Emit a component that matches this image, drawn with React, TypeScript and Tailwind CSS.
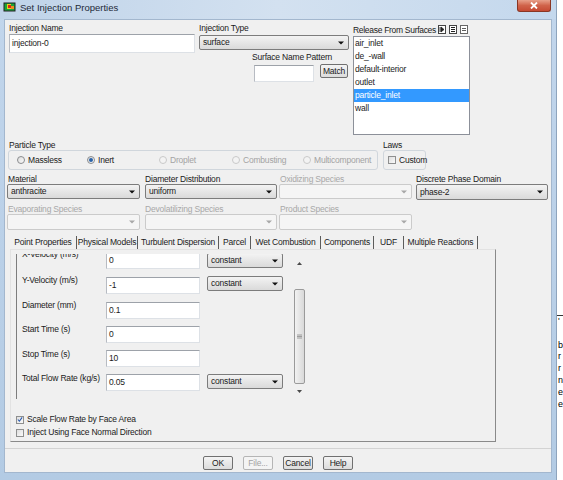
import React from "react";

function Arrow({ disabled }: { disabled?: boolean }) {
  return (
    <svg width="6" height="4" viewBox="0 0 6 4" className="shrink-0">
      <path d="M0 0.5h6L3 3.5z" fill={disabled ? "#a8a8a8" : "#111"} />
    </svg>
  );
}

function Combo({
  value,
  className,
  disabled,
}: {
  value?: string;
  className: string;
  disabled?: boolean;
}) {
  return (
    <div
      className={`flex items-center justify-between rounded-[2px] border pl-[3px] pr-[4px] ${
        disabled
          ? "border-[#cbcbcb] bg-[#f5f5f5]"
          : "border-[#7c7c7c] bg-gradient-to-b from-[#f3f3f3] to-[#dadada]"
      } ${className}`}
    >
      <span>{value}</span>
      <Arrow disabled={disabled} />
    </div>
  );
}

function TextBox({ value, className }: { value?: string; className: string }) {
  return (
    <div
      className={`flex items-center border border-t-[#9da2a9] border-l-[#b7bbc2] border-r-[#dde1e6] border-b-[#dde1e6] bg-white pl-[2px] ${className}`}
    >
      {value}
    </div>
  );
}

function Radio({
  label,
  checked,
  disabled,
  className,
}: {
  label: string;
  checked?: boolean;
  disabled?: boolean;
  className?: string;
}) {
  return (
    <div className={`flex items-center gap-[3px] ${className ?? ""}`}>
      <span
        className={`flex h-[8px] w-[8px] items-center justify-center rounded-full border ${
          disabled
            ? "border-[#c9c9c9] bg-[#f3f3f3]"
            : "border-[#8a8c8e] bg-gradient-to-br from-[#dcdcdc] to-[#fbfbfb]"
        }`}
      >
        {checked && <span className="h-[4px] w-[4px] rounded-full bg-[#2a63a8]" />}
      </span>
      <span className={disabled ? "text-[#a3a3a3]" : ""}>{label}</span>
    </div>
  );
}

function Check({ label, checked }: { label: string; checked?: boolean }) {
  return (
    <div className="flex h-[11px] items-center gap-[3px]">
      <span className="flex h-[8px] w-[8px] items-center justify-center border border-[#8e8f8f] bg-gradient-to-br from-[#dedede] to-[#fafafa]">
        {checked && (
          <svg width="7" height="7" viewBox="0 0 7 7">
            <path d="M1 3.5l1.8 2L6 1" stroke="#2a5bb0" strokeWidth="1.3" fill="none" />
          </svg>
        )}
      </span>
      <span>{label}</span>
    </div>
  );
}

function Btn({ label, disabled }: { label: string; disabled?: boolean }) {
  return (
    <div
      className={`flex h-[14px] w-[30px] items-center justify-center rounded-[2px] border ${
        disabled
          ? "border-[#b5b5b5] bg-[#f4f4f4] text-[#a3a3a3]"
          : "border-[#707070] bg-gradient-to-b from-[#f4f4f4] to-[#dcdcdc]"
      }`}
    >
      {label}
    </div>
  );
}

const surfaces = ["air_inlet", "de_-wall", "default-interior", "outlet", "particle_inlet", "wall"];

const tabs: [string, string][] = [
  ["Point Properties", "w-[66px]"],
  ["Physical Models", "w-[60px]"],
  ["Turbulent Dispersion", "w-[80px]"],
  ["Parcel", "w-[31px]"],
  ["Wet Combustion", "w-[69px]"],
  ["Components", "w-[52px]"],
  ["UDF", "w-[29px]"],
  ["Multiple Reactions", "w-[73px]"],
];

export default function App() {
  return (
    <div className="flex h-[480px] w-[563px] overflow-hidden bg-white font-['Liberation_Sans',Arial,sans-serif] text-[8.5px] leading-[11px] tracking-[-0.2px] text-[#1b1b1b]">
      {/* window */}
      <div className="flex h-[480px] w-[557px] flex-col bg-gradient-to-b from-[#c2d6ec] to-[#b3cbe4] border-r border-[#8ea4bd]">
        {/* title bar */}
        <div className="flex h-[19px] items-start bg-gradient-to-r from-[#bfd3e9] via-[#d3e1f0] to-[#c4d8ed]">
          <svg width="13" height="10" viewBox="0 0 13 10" className="ml-[3px] mt-[2px]">
            <rect x="0.5" y="0.5" width="12" height="9" fill="#222" />
            <rect x="1.5" y="1.5" width="10" height="7" fill="#1aa33a" />
            <rect x="4" y="2" width="4" height="5" fill="#e8d21c" />
            <rect x="5" y="3" width="3" height="3" fill="#d8261c" />
            <rect x="8" y="4" width="3" height="3" fill="#f08a1c" />
          </svg>
          <span className="ml-[4px] mt-[2px] text-[9.5px] leading-[12px] tracking-normal text-[#1e2a38]">
            Set Injection Properties
          </span>
          <div className="ml-auto mr-[5px] flex h-[12px] w-[34px] items-center justify-center rounded-b-[3px] border border-t-0 border-[#8a3624] bg-gradient-to-b from-[#e7a08a] via-[#d0634a] to-[#c54a33]">
            <svg width="8" height="7" viewBox="0 0 8 7">
              <path d="M1 0.5l6 6M7 0.5l-6 6" stroke="#fff" strokeWidth="1.8" />
            </svg>
          </div>
        </div>

        {/* content */}
        <div className="ml-[4px] flex h-[454px] w-[548px] flex-col border border-[#a3b7ce] bg-[#f0f0f0]">
          {/* top section */}
          <div className="flex pt-[3px]">
            <div className="ml-[4px] flex w-[186px] flex-col">
              <div className="h-[11px]">Injection Name</div>
              <TextBox value="injection-0" className="h-[19px] w-[186px]" />
            </div>
            <div className="ml-[4px] flex w-[150px] flex-col">
              <div className="h-[11px]">Injection Type</div>
              <Combo value="surface" className="mt-[1px] h-[15px] w-[150px]" />
              <div className="ml-[53px] mt-[2px] h-[11px] whitespace-nowrap">Surface Name Pattern</div>
              <div className="ml-[55px] mt-[1px] flex items-start">
                <TextBox className="mt-[1px] h-[17px] w-[60px]" />
                <div className="ml-[6px] flex h-[14px] w-[28px] items-center justify-center rounded-[2px] border border-[#707070] bg-gradient-to-b from-[#f4f4f4] to-[#dcdcdc]">
                  Match
                </div>
              </div>
            </div>
            <div className="ml-[4px] flex w-[117px] flex-col">
              <div className="flex h-[13px] items-end">
                <span className="whitespace-nowrap tracking-[-0.3px]">Release From Surfaces</span>
                <div className="mb-[2px] ml-auto mr-[2px] flex shrink-0 gap-[3px]">
                  <svg width="8" height="9" viewBox="0 0 8 9">
                    <rect x="0.5" y="0.5" width="7" height="8" fill="#fff" stroke="#444" />
                    <path d="M2 2v5M3 2l3 2.5L3 7z" stroke="#222" strokeWidth="0.8" fill="#222" />
                  </svg>
                  <svg width="8" height="9" viewBox="0 0 8 9">
                    <rect x="0.5" y="0.5" width="7" height="8" fill="#fff" stroke="#444" />
                    <path d="M2 2.5h4M2 4.5h4M2 6.5h4" stroke="#222" strokeWidth="1" />
                  </svg>
                  <svg width="8" height="9" viewBox="0 0 8 9">
                    <rect x="0.5" y="0.5" width="7" height="8" fill="#fff" stroke="#666" />
                    <path d="M2 3.5h4M2 5.5h4" stroke="#333" strokeWidth="0.8" />
                  </svg>
                </div>
              </div>
              <div className="h-[99px] w-[117px] border border-[#8c9099] bg-white">
                {surfaces.map((s) => (
                  <div
                    key={s}
                    className={`flex h-[13px] items-center pl-[1px] ${
                      s === "particle_inlet" ? "bg-[#3399ff] text-white" : ""
                    }`}
                  >
                    {s}
                  </div>
                ))}
              </div>
            </div>
          </div>

          {/* particle type + laws */}
          <div className="mt-[5px] flex">
            <div className="ml-[3px] flex w-[370px] flex-col">
              <div className="h-[10px] pl-[1px] leading-[10px]">Particle Type</div>
              <div className="flex h-[20px] items-center rounded-[3px] border border-[#d0d6dc] pl-[8px]">
                <Radio label="Massless" className="w-[70px]" />
                <Radio label="Inert" checked className="w-[72px]" />
                <Radio label="Droplet" disabled className="w-[73px]" />
                <Radio label="Combusting" disabled className="w-[71px]" />
                <Radio label="Multicomponent" disabled />
              </div>
            </div>
            <div className="ml-[5px] flex w-[43px] flex-col">
              <div className="h-[10px] leading-[10px]">Laws</div>
              <div className="flex h-[20px] items-center rounded-[3px] border border-[#d0d6dc] pl-[4px]">
                <Check label="Custom" />
              </div>
            </div>
          </div>

          {/* selects row 1 */}
          <div className="mt-[4px] flex">
            <div className="ml-[2px] flex w-[133px] flex-col">
              <div className="h-[10px] pl-[1px] leading-[10px]">Material</div>
              <Combo value="anthracite" className="h-[15px] w-[133px]" />
            </div>
            <div className="ml-[5px] flex w-[132px] flex-col">
              <div className="h-[10px] leading-[10px]">Diameter Distribution</div>
              <Combo value="uniform" className="h-[15px] w-[132px]" />
            </div>
            <div className="ml-[2px] flex w-[133px] flex-col">
              <div className="h-[10px] pl-[1px] leading-[10px] text-[#a8a8a8]">Oxidizing Species</div>
              <Combo disabled className="h-[15px] w-[133px]" />
            </div>
            <div className="ml-[4px] flex w-[132px] flex-col">
              <div className="h-[10px] leading-[10px]">Discrete Phase Domain</div>
              <Combo value="phase-2" className="h-[16px] w-[132px]" />
            </div>
          </div>

          {/* selects row 2 */}
          <div className="mt-[4px] flex text-[#a8a8a8]">
            <div className="ml-[2px] flex w-[133px] flex-col">
              <div className="h-[10px] pl-[1px] leading-[10px]">Evaporating Species</div>
              <Combo disabled className="h-[16px] w-[133px]" />
            </div>
            <div className="ml-[5px] flex w-[132px] flex-col">
              <div className="h-[10px] leading-[10px]">Devolatilizing Species</div>
              <Combo disabled className="h-[16px] w-[132px]" />
            </div>
            <div className="ml-[2px] flex w-[133px] flex-col">
              <div className="h-[10px] pl-[1px] leading-[10px]">Product Species</div>
              <Combo disabled className="h-[16px] w-[133px]" />
            </div>
          </div>

          {/* tabs */}
          <div className="ml-[5px] mt-[5px] flex h-[14px]">
            {tabs.map(([t, w]) => (
              <React.Fragment key={t}>
                <div className={`flex items-center justify-center whitespace-nowrap ${w}`}>{t}</div>
                <div className="mt-[1px] h-[13px] w-px bg-[#5c5c5c]" />
              </React.Fragment>
            ))}
          </div>

          {/* tab panel */}
          <div className="ml-[5px] flex h-[193px] w-[486px] flex-col border border-t-[#e2e2e2] border-l-[#e2e2e2] border-r-[#8a8a8a] border-b-[#8a8a8a]">
            <div className="ml-[5px] mt-[4px] flex h-[145px] w-[291px] border-l border-[#7d7d7d]">
              <div className="flex h-[145px] w-[277px] flex-col overflow-hidden">
                <div className="-mt-[2px] flex h-[17px] items-start pl-[5px]">
                  <span className="-mt-[3px] w-[84px]">X-Velocity (m/s)</span>
                  <TextBox value="0" className="h-[17px] w-[94px]" />
                  <Combo value="constant" className="ml-[7px] mt-px h-[15px] w-[76px]" />
                </div>
                <div className="mt-[8px] flex h-[17px] items-start pl-[5px]">
                  <span className="-mt-[2px] w-[84px]">Y-Velocity (m/s)</span>
                  <TextBox value="-1" className="h-[17px] w-[94px]" />
                  <Combo value="constant" className="ml-[7px] -mt-px h-[15px] w-[76px]" />
                </div>
                <div className="mt-[8px] flex h-[17px] items-start pl-[5px]">
                  <span className="-mt-[2px] w-[84px]">Diameter (mm)</span>
                  <TextBox value="0.1" className="h-[17px] w-[94px]" />
                </div>
                <div className="mt-[7px] flex h-[17px] items-start pl-[5px]">
                  <span className="-mt-[2px] w-[84px]">Start Time (s)</span>
                  <TextBox value="0" className="h-[17px] w-[94px]" />
                </div>
                <div className="mt-[7px] flex h-[17px] items-start pl-[5px]">
                  <span className="-mt-[1px] w-[84px]">Stop Time (s)</span>
                  <TextBox value="10" className="h-[17px] w-[94px]" />
                </div>
                <div className="mt-[7px] flex h-[17px] items-start pl-[5px]">
                  <span className="-mt-[1px] w-[84px] whitespace-nowrap">Total Flow Rate (kg/s)</span>
                  <TextBox value="0.05" className="h-[17px] w-[94px]" />
                  <Combo value="constant" className="ml-[7px] h-[15px] w-[76px]" />
                </div>
              </div>
              {/* scrollbar */}
              <div className="flex w-[11px] flex-col">
                <div className="flex h-[18px] items-center justify-center">
                  <svg width="5" height="3" viewBox="0 0 5 3">
                    <path d="M0 3h5L2.5 0z" fill="#4a4a4a" />
                  </svg>
                </div>
                <div className="h-[17px]" />
                <div className="flex h-[95px] items-center justify-center rounded-[2px] border border-[#9a9a9a] bg-gradient-to-r from-[#f2f2f2] to-[#d9d9d9]">
                  <svg width="5" height="5" viewBox="0 0 5 5">
                    <path d="M0 1h5M0 2.5h5M0 4h5" stroke="#8a8a8a" strokeWidth="0.8" />
                  </svg>
                </div>
                <div className="flex flex-1 items-center justify-center">
                  <svg width="5" height="3" viewBox="0 0 5 3">
                    <path d="M0 0h5L2.5 3z" fill="#4a4a4a" />
                  </svg>
                </div>
              </div>
            </div>
            <div className="ml-[5px] mt-[15px]">
              <Check label="Scale Flow Rate by Face Area" checked />
            </div>
            <div className="ml-[5px] mt-[2px]">
              <Check label="Inject Using Face Normal Direction" />
            </div>
          </div>

          <div className="mt-[6px] h-px w-full bg-[#d3d3d3]" />

          {/* buttons */}
          <div className="mt-[7px] flex justify-center gap-[10px]">
            <Btn label="OK" />
            <Btn label="File..." disabled />
            <Btn label="Cancel" />
            <Btn label="Help" />
          </div>
        </div>
      </div>

      {/* page behind the dialog */}
      <div className="flex w-[6px] flex-col pl-[1px] text-[9px] leading-[11.8px] text-black">
        <div className="h-[315px]" />
        <div className="-ml-[1px] h-px w-[6px] bg-[#333]" />
        <div>'</div>
        <div>&nbsp;</div>
        <div>b</div>
        <div>r</div>
        <div>r</div>
        <div>n</div>
        <div>e</div>
        <div>e</div>
      </div>
    </div>
  );
}
